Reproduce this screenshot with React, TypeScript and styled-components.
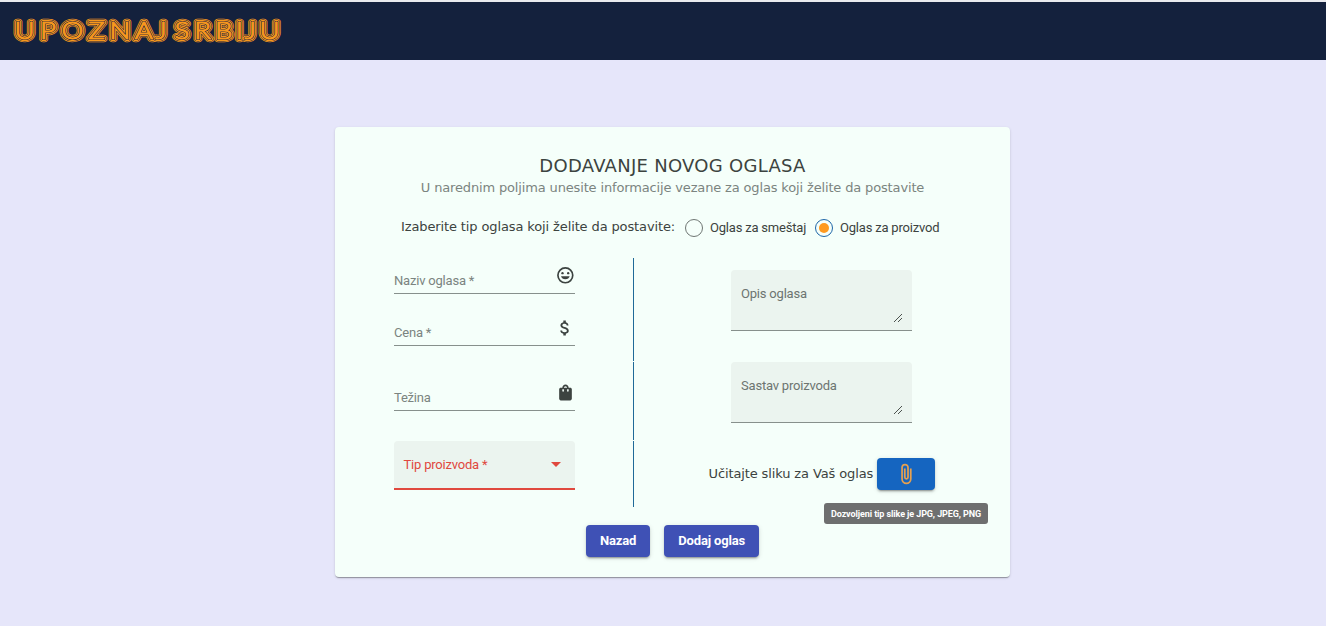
import React from "react";
import styled, { createGlobalStyle } from "styled-components";
import { MdAttachMoney, MdShoppingBag } from "react-icons/md";

const GlobalStyle = createGlobalStyle`
  *, *::before, *::after { box-sizing: border-box; }
  body {
    margin: 0;
    min-height: 100vh;
    background: #e6e6fa;
    font-family: Roboto, "Liberation Sans", sans-serif;
    font-size: 13px;
    letter-spacing: -0.2px;
    color: #3c4340;
    overflow: hidden;
  }
`;

const Header = styled.header`
  height: 60px;
  border-top: 2px solid #e9eaee;
  background: #14213d;
  display: flex;
  padding: 12px 0 0 10px;
`;

const Main = styled.main`
  display: flex;
  padding: 67px 0 0 335px;
`;

const Card = styled.section`
  width: 675px;
  height: 450px;
  padding-top: 28px;
  border-radius: 4px;
  background: #f5fffa;
  box-shadow: 0 2px 1px -1px rgba(0, 0, 0, 0.2), 0 1px 1px rgba(0, 0, 0, 0.14),
    0 1px 3px rgba(0, 0, 0, 0.12);
`;

const Title = styled.h1`
  margin: 0;
  font: 400 18px/22px "DejaVu Sans", sans-serif;
  letter-spacing: 0.28px;
  text-align: center;
`;

const Subtitle = styled.p`
  margin: 0;
  font: 400 13px/21px "DejaVu Sans", sans-serif;
  letter-spacing: -0.15px;
  color: #7b8480;
  text-align: center;
`;

const TypeRow = styled.div`
  display: flex;
  align-items: center;
  height: 24px;
  margin: 17px 0 19px 66px;
`;

const Prompt = styled.span<{ $width: number }>`
  width: ${(p) => p.$width}px;
  font: 400 13px/20px "DejaVu Sans", sans-serif;
  letter-spacing: -0.12px;
  white-space: nowrap;
`;

const Radio = styled.label<{ $width: number }>`
  display: flex;
  align-items: center;
  gap: 7px;
  width: ${(p) => p.$width}px;
  padding-top: 2px;
  line-height: 16px;
  white-space: nowrap;
`;

const Dot = styled.span<{ $checked?: boolean }>`
  display: grid;
  place-items: center;
  flex: none;
  width: 18px;
  height: 18px;
  border: 1px solid ${(p) => (p.$checked ? "#1f66a8" : "#6f7673")};
  border-radius: 50%;
  &::after {
    content: "";
    width: 10px;
    height: 10px;
    border-radius: 50%;
    background: ${(p) => (p.$checked ? "#ff9a1f" : "transparent")};
  }
`;

const FormGrid = styled.div`
  display: grid;
  grid-template-columns: 299px 1fr;
  grid-template-rows: 103px 78px 66px;
  row-gap: 1px;
`;

const LeftCell = styled.div<{ $top?: number }>`
  display: flex;
  flex-direction: column;
  gap: 20px;
  padding: ${(p) => p.$top ?? 0}px 58px 0 59px;
  border-right: 1px solid #1f6a98;
`;

const RightCell = styled.div<{ $top?: number; $left?: number }>`
  display: flex;
  align-items: flex-start;
  padding: ${(p) => p.$top ?? 0}px 0 0 ${(p) => p.$left ?? 97}px;
`;

const UploadRow = styled(RightCell)`
  align-items: center;
  height: 49px;
`;

const Field = styled.div`
  display: flex;
  justify-content: space-between;
  width: 181px;
  height: 32px;
  flex: none;
  border-bottom: 1px solid #87908c;
  color: #7b8480;
  line-height: 16px;
  span { margin-top: 11px; }
`;

const IconSlot = styled.i<{ $drop?: number }>`
  display: grid;
  place-items: center;
  width: 20px;
  height: 20px;
  margin-top: ${(p) => 3 + (p.$drop ?? 0)}px;
  color: #3c4340;
`;

const Select = styled.div`
  display: flex;
  justify-content: space-between;
  align-items: center;
  width: 181px;
  height: 49px;
  padding: 0 14px 0 9.5px;
  border-bottom: 2px solid #e0483e;
  border-radius: 4px 4px 0 0;
  background: #ebf4ef;
  color: #e0483e;
`;

const Caret = styled.span`
  border: 5px solid transparent;
  border-top: 5px solid #e0483e;
  border-bottom: 0;
`;

const Area = styled.div`
  display: flex;
  justify-content: space-between;
  width: 181px;
  height: 61px;
  padding: 16px 9px 0 10px;
  border-bottom: 1px solid #87908c;
  border-radius: 4px 4px 0 0;
  background: #ebf4ef;
  color: #6d7571;
  line-height: 16px;
  svg { margin-top: 28px; }
`;

const Button = styled.button<{ $upload?: boolean }>`
  display: grid;
  place-items: center;
  height: 32px;
  padding: 0 ${(p) => (p.$upload ? 18 : 14)}px;
  border: 0;
  border-radius: 4px;
  background: ${(p) => (p.$upload ? "#1565c0" : "#3f51b5")};
  color: ${(p) => (p.$upload ? "#e5a050" : "#fff")};
  font: 700 13px/32px Roboto, sans-serif;
  letter-spacing: -0.15px;
  box-shadow: 0 3px 1px -2px rgba(0, 0, 0, 0.2), 0 2px 2px rgba(0, 0, 0, 0.14),
    0 1px 5px rgba(0, 0, 0, 0.12);
`;

const UploadWrap = styled.div`
  position: relative;
`;

const Tooltip = styled.div`
  position: absolute;
  top: 45px;
  left: 50%;
  width: 164px;
  height: 21px;
  transform: translateX(-50%);
  border-radius: 3px;
  background: #6e6f6f;
  color: #fff;
  font-size: 9px;
  font-weight: 700;
  line-height: 22px;
  letter-spacing: -0.1px;
  text-align: center;
  white-space: nowrap;
`;

const Actions = styled.div`
  display: flex;
  gap: 14px;
  padding: 18px 0 0 251px;
`;

const LogoText = styled.text`
  font-family: Lato, sans-serif;
  font-weight: 300;
  font-size: 24px;
  letter-spacing: 0;
  text-anchor: middle;
`;

const Logo = () => (
  <svg width="280" height="34" viewBox="10 14 280 34" strokeLinejoin="round">
    <defs>
      <LogoText
        id="wordmark"
        y="39"
        transform="scale(1.15 1)"
        x="21.4 41.8 63 84 104.3 125 140 146 158.2 176.1 194.6 208.2 217.6 234.4"
      >
        UPOZNAJ SRBIJU
      </LogoText>
    </defs>
    <use href="#wordmark" fill="#f7981d" stroke="#f7981d" strokeWidth="6.4" />
    <use href="#wordmark" fill="#14213d" stroke="#14213d" strokeWidth="5" />
    <use href="#wordmark" fill="#f7981d" stroke="#f7981d" strokeWidth="4.1" />
    <use href="#wordmark" fill="#14213d" stroke="#14213d" strokeWidth="2.1" />
    <use href="#wordmark" fill="#f7981d" stroke="#f7981d" strokeWidth="1" />
  </svg>
);

const Smile = () => (
  <svg width="20" height="20" viewBox="0 0 24 24" fill="currentColor">
    <circle cx="12.4" cy="12.4" r="8.9" fill="none" stroke="currentColor" strokeWidth="2" />
    <circle cx="9" cy="9.8" r="1.4" />
    <circle cx="15.8" cy="9.8" r="1.4" />
    <path d="M7.2 13.4h10.4a5.4 4.9 0 0 1-10.4 0z" />
  </svg>
);

const Clip = () => (
  <svg width="22" height="22" viewBox="0 0 24 24" fill="none" stroke="currentColor" strokeWidth="1.9">
    <path d="M17.2 6v11.5a4.75 4.75 0 0 1-9.5 0V5a3.25 3.25 0 0 1 6.5 0v10.5a1.75 1.75 0 0 1-3.5 0V6" />
  </svg>
);

const Grip = () => (
  <svg width="9" height="9" viewBox="0 0 9 9" stroke="#4c524f" strokeWidth="1">
    <path d="M0 8 8 0M4 8 8 4" />
  </svg>
);

export default function App() {
  return (
    <>
      <GlobalStyle />
      <Header>
        <Logo />
      </Header>
      <Main>
        <Card>
          <Title>DODAVANJE NOVOG OGLASA</Title>
          <Subtitle>U narednim poljima unesite informacije vezane za oglas koji želite da postavite</Subtitle>
          <TypeRow>
            <Prompt $width={284}>Izaberite tip oglasa koji želite da postavite:</Prompt>
            <Radio $width={130}>
              <Dot />
              Oglas za smeštaj
            </Radio>
            <Radio $width={126}>
              <Dot $checked />
              Oglas za proizvod
            </Radio>
          </TypeRow>
          <FormGrid>
            <LeftCell $top={4}>
              <Field>
                <span>Naziv oglasa *</span>
                <IconSlot><Smile /></IconSlot>
              </Field>
              <Field>
                <span>Cena *</span>
                <IconSlot $drop={1}><MdAttachMoney size={20} /></IconSlot>
              </Field>
            </LeftCell>
            <RightCell $top={12}>
              <Area>
                Opis oglasa
                <Grip />
              </Area>
            </RightCell>
            <LeftCell $top={17}>
              <Field>
                <span>Težina</span>
                <IconSlot><MdShoppingBag size={19} /></IconSlot>
              </Field>
            </LeftCell>
            <RightCell>
              <Area>
                Sastav proizvoda
                <Grip />
              </Area>
            </RightCell>
            <LeftCell>
              <Select>
                Tip proizvoda *
                <Caret />
              </Select>
            </LeftCell>
            <UploadRow $top={17} $left={74.5}>
              <Prompt $width={168.5}>Učitajte sliku za Vaš oglas</Prompt>
              <UploadWrap>
                <Button $upload aria-label="Učitaj sliku">
                  <Clip />
                </Button>
                <Tooltip>Dozvoljeni tip slike je JPG, JPEG, PNG</Tooltip>
              </UploadWrap>
            </UploadRow>
          </FormGrid>
          <Actions>
            <Button>Nazad</Button>
            <Button>Dodaj oglas</Button>
          </Actions>
        </Card>
      </Main>
    </>
  );
}
